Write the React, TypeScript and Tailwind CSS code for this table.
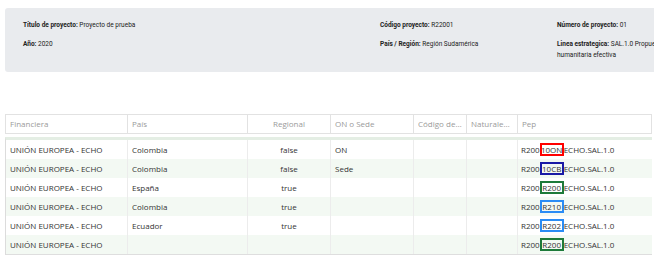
import React from 'react';

type Row = {
  financiera: string;
  pais: string;
  regional: string;
  sede: string;
  code: string;
  box: string;
};

const rows: Row[] = [
  { financiera: 'UNIÓN EUROPEA - ECHO', pais: 'Colombia', regional: 'false', sede: 'ON', code: '10ON', box: 'border-[#ff0000]' },
  { financiera: 'UNIÓN EUROPEA - ECHO', pais: 'Colombia', regional: 'false', sede: 'Sede', code: '10CB', box: 'border-[#1a1aa6]' },
  { financiera: 'UNIÓN EUROPEA - ECHO', pais: 'España', regional: 'true', sede: '', code: 'R200', box: 'border-[#1d7a3a]' },
  { financiera: 'UNIÓN EUROPEA - ECHO', pais: 'Colombia', regional: 'true', sede: '', code: 'R210', box: 'border-[#2a8cf5]' },
  { financiera: 'UNIÓN EUROPEA - ECHO', pais: 'Ecuador', regional: 'true', sede: '', code: 'R202', box: 'border-[#2a8cf5]' },
  { financiera: 'UNIÓN EUROPEA - ECHO', pais: '', regional: '', sede: '', code: 'R200', box: 'border-[#1d7a3a]' },
];

const cols = 'grid grid-cols-[122px_120px_83px_83px_53px_51px_135px]';

function Field({ label, value }: { label: string; value: string }) {
  return (
    <p>
      <span className="font-bold">{label}</span> {value}
    </p>
  );
}

export default function App() {
  return (
    <div className="w-[654px] h-[255px] overflow-hidden bg-white relative">
      {/* Project info card */}
      <div className="ml-[5px] mt-[8px] w-[760px] h-[64px] rounded-[3px] bg-[#e9ebee] font-['Roboto',sans-serif] text-[6.5px] leading-[11px] text-[#222] pt-[12px] pl-[18px] flex">
        <div className="w-[357px] flex flex-col gap-[8px]">
          <Field label="Título de proyecto:" value="Proyecto de prueba" />
          <Field label="Año:" value="2020" />
        </div>
        <div className="w-[177px] flex flex-col gap-[8px]">
          <Field label="Código proyecto:" value="R22001" />
          <Field label="País / Región:" value="Región Sudamérica" />
        </div>
        <div className="w-[180px] flex flex-col gap-[8px]">
          <Field label="Número de proyecto:" value="01" />
          <Field label="Linea estrategica:" value="SAL.1.0 Propuesta de respuesta humanitaria efectiva" />
        </div>
      </div>

      {/* Table */}
      <div className="ml-[5px] mt-[42px] w-[647px] font-['Open_Sans',sans-serif] text-[8px]">
        <div className={`${cols} h-[20px] border border-[#e2e2e2] text-[#9a9a9a] items-center`}>
          <div className="px-[4px] h-full flex items-center border-r border-[#e2e2e2]">Financiera</div>
          <div className="px-[4px] h-full flex items-center border-r border-[#e2e2e2]">País</div>
          <div className="px-[4px] h-full flex items-center justify-center border-r border-[#e2e2e2]">Regional</div>
          <div className="px-[4px] h-full flex items-center border-r border-[#e2e2e2]">ON o Sede</div>
          <div className="px-[4px] h-full flex items-center border-r border-[#e2e2e2] min-w-0"><span className="truncate">Código de proyecto</span></div>
          <div className="px-[4px] h-full flex items-center border-r border-[#e2e2e2] min-w-0"><span className="truncate">Naturaleza del gasto</span></div>
          <div className="px-[4px] h-full flex items-center">Pep</div>
        </div>

        <div className="mt-[3px] border-t-[3px] border-l border-b-2 border-[#e4eee4] border-l-[#dcdcdc] border-b-[#dedede] text-[#333]">
          {rows.map((r, i) => (
            <div key={i} className={`${cols} h-[19px] ${i % 2 === 1 ? 'bg-[#f3f9f3]' : 'bg-white'}`}>
              <div className="px-[4px] flex items-center border-r border-[#ececec]">{r.financiera}</div>
              <div className="px-[4px] flex items-center border-r border-[#ececec]">{r.pais}</div>
              <div className="px-[4px] flex items-center justify-center border-r border-[#ececec]">{r.regional}</div>
              <div className="px-[4px] flex items-center border-r border-[#ececec]">{r.sede}</div>
              <div className="border-r border-[#ececec]" />
              <div className="border-r border-[#ececec]" />
              <div className="px-[3px] flex items-center whitespace-nowrap">
                <span>R200</span>
                <span className={`inline-flex items-center justify-center h-[13px] w-[24px] border-2 ${r.box}`}>{r.code}</span>
                <span>ECHO.SAL.1.0</span>
              </div>
            </div>
          ))}
        </div>
      </div>
    </div>
  );
}
